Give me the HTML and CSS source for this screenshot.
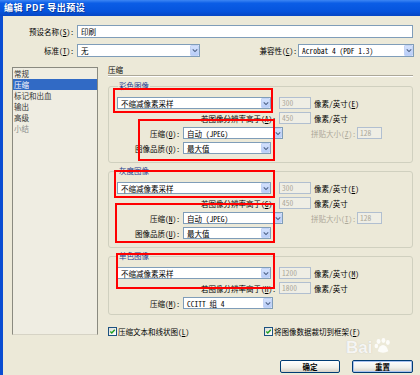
FILE: index.html
```html
<!DOCTYPE html>
<html lang="zh-CN">
<head>
<meta charset="utf-8">
<title>编辑 PDF 导出预设</title>
<link rel="stylesheet" href="styles.css">
</head>
<body>
<div class="titlebar">编辑 PDF 导出预设</div>
<div class="frame">
  <div class="content">
    <div class="row r1">
      <span class="lbl">预设名称(<u>S</u>):</span>
      <div class="field name">印刷</div>
    </div>
    <div class="row r2">
      <span class="lbl">标准(<u>T</u>):</span>
      <div class="combo std"><span class="val">无</span><span class="arr"><svg viewBox="0 0 8 6" width="6" height="5"><path d="M1 1.5 L4 4.5 L7 1.5" fill="none" stroke="#4d6185" stroke-width="1.4"/></svg></span></div>
      <span class="lbl2">兼容性(<u>C</u>):</span>
      <div class="combo compat"><span class="val">Acrobat 4 (PDF 1.3)</span><span class="arr"><svg viewBox="0 0 8 6" width="6" height="5"><path d="M1 1.5 L4 4.5 L7 1.5" fill="none" stroke="#4d6185" stroke-width="1.4"/></svg></span></div>
    </div>

    <div class="main">
      <ul class="list">
        <li>常规</li>
        <li class="sel">压缩</li>
        <li>标记和出血</li>
        <li>输出</li>
        <li>高级</li>
        <li class="dim">小结</li>
      </ul>

      <div class="panel">
        <div class="heading">压缩</div>

        <div class="group g-full">
          <span class="gtitle">彩色图像</span>
          <div class="grow">
            <div class="combo wide"><span class="val">不缩减像素采样</span><span class="arr"><svg viewBox="0 0 8 6" width="6" height="5"><path d="M1 1.5 L4 4.5 L7 1.5" fill="none" stroke="#4d6185" stroke-width="1.4"/></svg></span></div>
            <div class="field dis res">300</div>
            <span class="unit">像素/英寸(<u>E</u>)</span>
          </div>
          <div class="grow">
            <span class="lbl-long">若图像分辨率高于(<u>A</u>):</span>
            <div class="field dis res2">450</div>
            <span class="unit">像素/英寸</span>
          </div>
          <div class="grow">
            <span class="lbl-short">压缩(<u>O</u>):</span>
            <div class="combo cmp"><span class="val">自动 (JPEG)</span><span class="arr"><svg viewBox="0 0 8 6" width="6" height="5"><path d="M1 1.5 L4 4.5 L7 1.5" fill="none" stroke="#4d6185" stroke-width="1.4"/></svg></span></div>
            <span class="lbl-tile">拼贴大小(<u>Z</u>):</span>
            <div class="field dis tile">128</div>
          </div>
          <div class="grow">
            <span class="lbl-short">图像品质(<u>Q</u>):</span>
            <div class="combo qual"><span class="val">最大值</span><span class="arr"><svg viewBox="0 0 8 6" width="6" height="5"><path d="M1 1.5 L4 4.5 L7 1.5" fill="none" stroke="#4d6185" stroke-width="1.4"/></svg></span></div>
          </div>
          <span class="mark m1a"></span>
          <span class="mark m1b"></span>
        </div>

        <div class="group g-full">
          <span class="gtitle">灰度图像</span>
          <div class="grow">
            <div class="combo wide"><span class="val">不缩减像素采样</span><span class="arr"><svg viewBox="0 0 8 6" width="6" height="5"><path d="M1 1.5 L4 4.5 L7 1.5" fill="none" stroke="#4d6185" stroke-width="1.4"/></svg></span></div>
            <div class="field dis res">300</div>
            <span class="unit">像素/英寸(<u>E</u>)</span>
          </div>
          <div class="grow">
            <span class="lbl-long">若图像分辨率高于(<u>G</u>):</span>
            <div class="field dis res2">450</div>
            <span class="unit">像素/英寸</span>
          </div>
          <div class="grow">
            <span class="lbl-short">压缩(<u>N</u>):</span>
            <div class="combo cmp"><span class="val">自动 (JPEG)</span><span class="arr"><svg viewBox="0 0 8 6" width="6" height="5"><path d="M1 1.5 L4 4.5 L7 1.5" fill="none" stroke="#4d6185" stroke-width="1.4"/></svg></span></div>
            <span class="lbl-tile">拼贴大小(<u>I</u>):</span>
            <div class="field dis tile">128</div>
          </div>
          <div class="grow">
            <span class="lbl-short">图像品质(<u>U</u>):</span>
            <div class="combo qual"><span class="val">最大值</span><span class="arr"><svg viewBox="0 0 8 6" width="6" height="5"><path d="M1 1.5 L4 4.5 L7 1.5" fill="none" stroke="#4d6185" stroke-width="1.4"/></svg></span></div>
          </div>
          <span class="mark m2a"></span>
          <span class="mark m2b"></span>
        </div>

        <div class="group g-mono">
          <span class="gtitle">单色图像</span>
          <div class="grow">
            <div class="combo wide"><span class="val">不缩减像素采样</span><span class="arr"><svg viewBox="0 0 8 6" width="6" height="5"><path d="M1 1.5 L4 4.5 L7 1.5" fill="none" stroke="#4d6185" stroke-width="1.4"/></svg></span></div>
            <div class="field dis res">1200</div>
            <span class="unit">像素/英寸(<u>M</u>)</span>
          </div>
          <div class="grow">
            <span class="lbl-long">若图像分辨率高于(<u>H</u>):</span>
            <div class="field dis res2">1800</div>
            <span class="unit">像素/英寸</span>
          </div>
          <div class="grow">
            <span class="lbl-short">压缩(<u>M</u>):</span>
            <div class="combo ccitt"><span class="val">CCITT 组 4</span><span class="arr"><svg viewBox="0 0 8 6" width="6" height="5"><path d="M1 1.5 L4 4.5 L7 1.5" fill="none" stroke="#4d6185" stroke-width="1.4"/></svg></span></div>
          </div>
          <span class="mark m3"></span>
        </div>

        <div class="checks">
          <label class="chk first"><span class="box"><svg viewBox="0 0 8 8" width="7" height="7"><path d="M1.5 4 L3.2 5.8 L6.6 2" fill="none" stroke="#21a121" stroke-width="1.6"/></svg></span>压缩文本和线状图(<u>L</u>)</label>
          <label class="chk"><span class="box"><svg viewBox="0 0 8 8" width="7" height="7"><path d="M1.5 4 L3.2 5.8 L6.6 2" fill="none" stroke="#21a121" stroke-width="1.6"/></svg></span>将图像数据裁切到框架(<u>F</u>)</label>
        </div>

        <div class="buttons">
          <button class="btn ok">确定</button>
          <button class="btn reset">重置</button>
        </div>
      </div>
    </div>
  </div>
</div>

<div class="watermark">
  <span class="wm-logo">Bai<svg class="paw" viewBox="0 0 20 18" width="18" height="16"><ellipse cx="5" cy="4" rx="2.2" ry="2.8" fill="currentColor"/><ellipse cx="10.5" cy="2.8" rx="2.2" ry="2.8" fill="currentColor"/><ellipse cx="15.5" cy="5" rx="2.2" ry="2.8" fill="currentColor"/><ellipse cx="2.5" cy="9" rx="2" ry="2.5" fill="currentColor"/><path d="M4 15 Q6 8 10 8 Q14 8 16 15 Q10 18 4 15 Z" fill="currentColor"/></svg></span>
</div>
</body>
</html>
```

FILE: styles.css
```css
* { box-sizing: border-box; }

html, body {
  margin: 0;
  padding: 0;
}

body {
  width: 420px;
  height: 375px;
  overflow: hidden;
  background: #ece9d8;
  font-family: "Noto Sans Mono CJK SC", "Noto Sans CJK SC", sans-serif;
  font-size: 7.5px;
  color: #000;
  position: relative;
}

u { text-decoration: underline; }

.titlebar {
  height: 16px;
  line-height: 15px;
  padding-left: 4px;
  color: #fff;
  font-weight: bold;
  font-size: 9px;
  font-family: "Noto Sans CJK SC", sans-serif;
  letter-spacing: 0.5px;
  background: linear-gradient(#3d86f4 0%, #0b5de6 20%, #0654dd 70%, #0646c4 100%);
  text-shadow: 1px 1px 0 #0a3a9a;
}

.frame {
  border-left: 3px solid #0a4dd2;
  height: 359px;
}

.content {
  padding-top: 9px;
}

.row {
  display: flex;
  align-items: center;
  height: 13px;
}

.r2 { margin-top: 6px; }

.lbl {
  width: 72px;
  text-align: right;
  padding-right: 1px;
}

.lbl2 {
  flex: 1;
  text-align: right;
  padding-right: 1px;
}

.field {
  height: 13px;
  border: 1px solid #7f9db9;
  background: #fff;
  line-height: 11px;
  padding-left: 3px;
  white-space: nowrap;
}

.name {
  margin-left: 2px;
  width: 336px;
}

.combo {
  display: flex;
  align-items: center;
  height: 13px;
  border: 1px solid #7f9db9;
  background: #fff;
  white-space: nowrap;
}

.combo .val {
  flex: 1;
  padding-left: 3px;
  line-height: 11px;
  overflow: hidden;
}

.combo .arr {
  width: 9px;
  height: 11px;
  display: flex;
  align-items: center;
  justify-content: center;
  background: linear-gradient(#d3e1fc, #b8cdf8);
  border: 1px solid #c3d3f5;
  border-radius: 1px;
}

.std { margin-left: 2px; width: 123px; }
.compat { width: 116px; margin-right: 6px; }

.main {
  display: flex;
  align-items: flex-start;
  margin-top: 5px;
}

.list {
  list-style: none;
  margin: 5px 0 0 9px;
  padding: 0;
  width: 86px;
  height: 268px;
  border: 1px solid #8a8a80;
  border-bottom-color: #d6d3c5;
  background: #efede2;
}

.list li {
  height: 11px;
  line-height: 11px;
  padding-left: 1px;
  color: #333;
}

.list li.sel {
  background: #316ac5;
  color: #fff;
}

.list li.dim { color: #8d8d8d; }

.panel {
  margin-left: 10px;
  width: 305px;
}

.heading {
  height: 14px;
  line-height: 11px;
  padding-top: 2px;
  border-bottom: 1px solid #aca899;
  box-shadow: 0 1px 0 #fff;
}

.group {
  position: relative;
  margin-top: 10px;
  border: 1px solid #d0d0bf;
  border-radius: 3px;
  padding: 10px 0 8px 0;
  display: flex;
  flex-direction: column;
  gap: 3px;
}

.group + .group { margin-top: 8px; }

.g-mono { padding-bottom: 5px; }

.gtitle {
  position: absolute;
  left: 9px;
  top: -6px;
  padding: 0 1px;
  background: #ece9d8;
  color: #1e3d8f;
  line-height: 10px;
}

.grow {
  display: flex;
  align-items: center;
  height: 12px;
}

.grow .combo { height: 12px; }
.grow .combo .arr { height: 10px; }
.grow .field { height: 12px; line-height: 10px; }

.wide { margin-left: 8px; width: 154px; }

.dis {
  background: #efeee5;
  border-color: #b1bfd0;
  color: #aca899;
  padding-left: 2px;
}

.res { margin-left: 8px; width: 32px; }
.res2 { margin-left: 3px; width: 32px; }

.unit { margin-left: 3px; white-space: nowrap; }

.lbl-long {
  width: 167px;
  text-align: right;
  white-space: nowrap;
}

.lbl-short {
  width: 71px;
  text-align: right;
  white-space: nowrap;
}

.cmp { margin-left: 3px; width: 100px; }
.qual { margin-left: 3px; width: 88px; }
.ccitt { margin-left: 3px; width: 90px; }

.lbl-tile {
  width: 73px;
  text-align: right;
  color: #aca899;
  white-space: nowrap;
}

.tile { margin-left: 1px; width: 25px; }

.mark {
  position: absolute;
  border: 2px solid #ff0000;
  pointer-events: none;
}

.m1a { left: 4px; top: 1px; width: 160px; height: 25px; }
.m1b { left: 29px; top: 32px; width: 137px; height: 42px; }
.m2a { left: 5px; top: -2px; width: 161px; height: 28px; }
.m2b { left: 6px; top: 31px; width: 160px; height: 40px; }
.m3  { left: 7px; top: -4px; width: 159px; height: 36px; }

.checks {
  display: flex;
  align-items: center;
  margin-top: 12px;
  height: 9px;
}

.chk {
  display: flex;
  align-items: center;
  white-space: nowrap;
}

.chk.first { width: 156px; }

.box {
  width: 9px;
  height: 9px;
  border: 1px solid #1c5180;
  background: linear-gradient(135deg, #dcdcd7, #fff);
  display: flex;
  align-items: center;
  justify-content: center;
  margin-right: 1px;
}

.buttons {
  display: flex;
  justify-content: flex-end;
  gap: 12px;
  margin-top: 24px;
}

.btn {
  height: 13px;
  padding: 0;
  font-family: "Noto Sans CJK SC", sans-serif;
  font-size: 7.5px;
  font-weight: bold;
  line-height: 11px;
  color: #000;
  border: 1px solid #003c74;
  border-radius: 2px;
  background: linear-gradient(#ffffff, #f0f0ea 60%, #d6d0c5);
}

.ok { width: 60px; }
.reset { width: 61px; box-shadow: inset 0 0 0 1px #a9c2ef; }

.watermark {
  position: absolute;
  left: 346px;
  top: 338px;
  color: rgba(255, 255, 255, 0.85);
  text-shadow: 0 0 1px rgba(150, 150, 150, 0.5);
  font-family: "Liberation Sans", sans-serif;
  pointer-events: none;
}

.wm-logo {
  display: flex;
  align-items: flex-end;
  font-size: 17px;
  font-weight: bold;
  line-height: 15px;
  white-space: nowrap;
}

.paw { margin: 0 1px 1px 2px; }
```
